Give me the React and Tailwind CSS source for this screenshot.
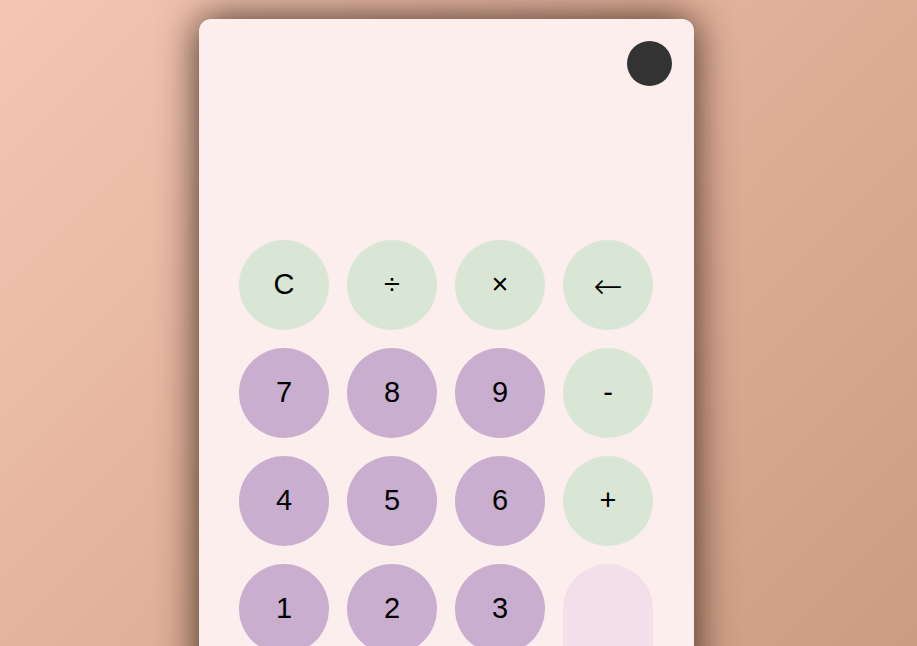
import React, { useState } from 'react';

const keys = [
  { label: 'C', kind: 'op' },
  { label: '÷', kind: 'op' },
  { label: '×', kind: 'op' },
  { label: '←', kind: 'op', arrow: true },
  { label: '7', kind: 'num' },
  { label: '8', kind: 'num' },
  { label: '9', kind: 'num' },
  { label: '-', kind: 'op' },
  { label: '4', kind: 'num' },
  { label: '5', kind: 'num' },
  { label: '6', kind: 'num' },
  { label: '+', kind: 'op' },
  { label: '1', kind: 'num' },
  { label: '2', kind: 'num' },
  { label: '3', kind: 'num' },
  { label: '=', kind: 'eq' },
  { label: '0', kind: 'num' },
  { label: '.', kind: 'num' },
];

const kindClass = {
  num: 'bg-[#c9aed0] rounded-full h-[90px]',
  op: 'bg-[#d9e6d5] rounded-full h-[90px]',
  eq: 'bg-[#f3dfea] rounded-[45px] row-span-2 text-transparent',
};

export default function App() {
  const [display, setDisplay] = useState('');

  return (
    <div className="min-h-screen w-full bg-[linear-gradient(135deg,#f4c7b3_0%,#dfae96_50%,#c8987d_100%)] pt-[19px] pl-[199px] font-['Liberation_Sans',Arial,sans-serif]">
      <div className="relative w-[495px] rounded-xl bg-[#fbeeed] px-[40px] pb-10 shadow-[0_0_40px_rgba(20,5,0,0.8)]">
        <button
          type="button"
          aria-label="toggle theme"
          className="absolute right-[22px] top-[22px] h-[45px] w-[45px] rounded-full bg-[#333333]"
        />
        <div className="h-[221px] flex items-end justify-end pb-4 text-5xl text-black">
          {display}
        </div>
        <div className="grid grid-cols-[repeat(4,90px)] auto-rows-[90px] gap-[18px]">
          {keys.map((k) => (
            <button
              key={k.label}
              type="button"
              onClick={() => setDisplay((d) => d)}
              className={`flex w-[90px] items-center justify-center text-[29px] text-black ${kindClass[k.kind]}`}
            >
              {k.arrow ? (
                <span className="font-['DejaVu_Sans',sans-serif] font-extralight text-[35px] leading-none mt-[2px]">{k.label}</span>
              ) : (
                k.label
              )}
            </button>
          ))}
        </div>
      </div>
    </div>
  );
}
